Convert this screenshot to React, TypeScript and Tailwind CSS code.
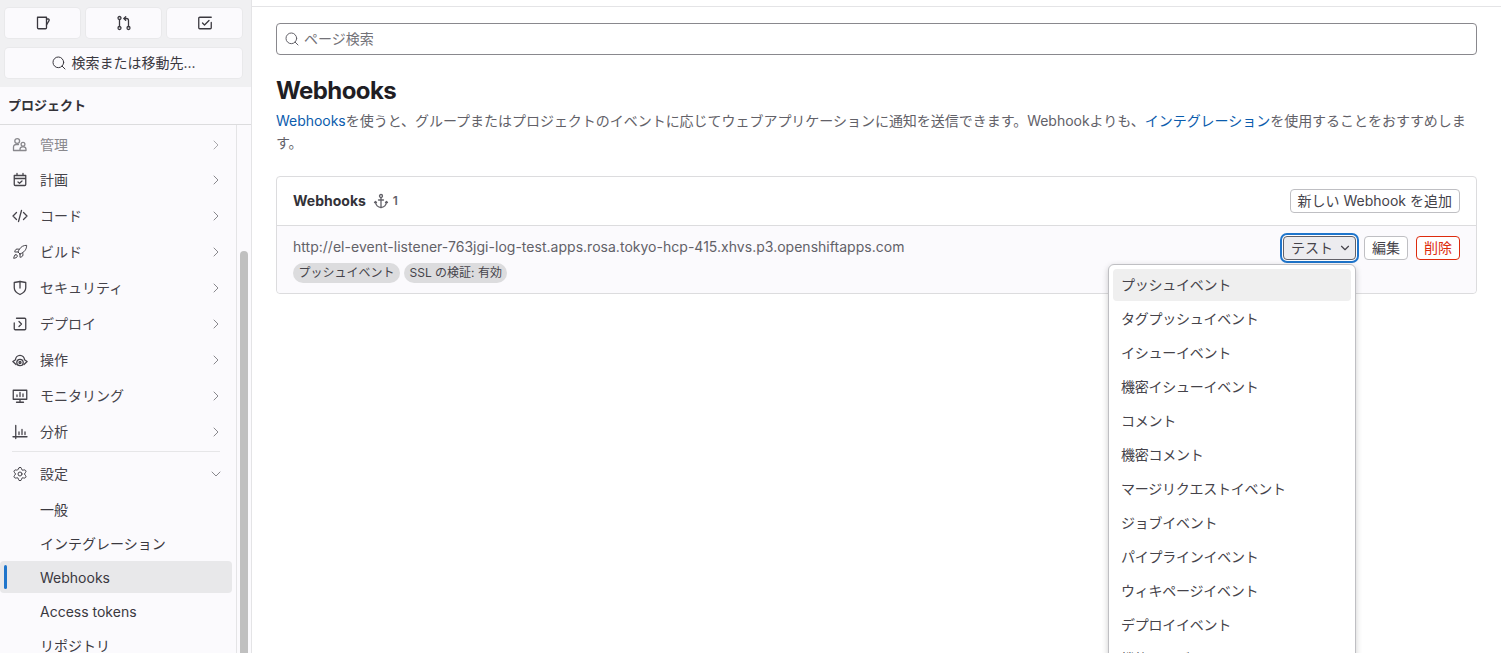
import type { ReactNode } from 'react';

import { ChevronDown, ChevronRight, Rocket, Search, Settings } from 'lucide-react';

const Icon = ({ children }: { children: ReactNode }) => (
  <svg
    width="16"
    height="16"
    viewBox="0 0 16 16"
    fill="none"
    stroke="currentColor"
    strokeWidth="1.3"
    strokeLinecap="round"
    strokeLinejoin="round"
    className="shrink-0"
  >
    {children}
  </svg>
);

const IssueIcon = () => (
  <Icon>
    <path d="M2.5 2.25h9v10.5a1 1 0 0 1-1 1h-7a1 1 0 0 1-1-1z" />
    <path d="M11.5 4h1.7a1 1 0 0 1 .8 1.6L11.5 10" />
  </Icon>
);
const MergeIcon = () => (
  <Icon>
    <circle cx="3.5" cy="3" r="1.5" />
    <circle cx="3.5" cy="13" r="1.5" />
    <circle cx="12.5" cy="13" r="1.5" />
    <path d="M3.5 4.5v7M12.5 11.5V5.5a2 2 0 0 0-2-2H8" />
    <path d="M9.7 1.8 8 3.5l1.7 1.7" />
  </Icon>
);
const TodoIcon = () => (
  <Icon>
    <path d="M14.25 7.5v5.25a1 1 0 0 1-1 1H2.75a1 1 0 0 1-1-1V3.25a1 1 0 0 1 1-1h11.5" />
    <path d="m5.5 8 2 2 4.5-4.5" />
  </Icon>
);
const UsersIcon = () => (
  <Icon>
    <circle cx="5.2" cy="4" r="2.4" />
    <path d="M1.5 13.5V10A2.5 2.5 0 0 1 4 7.5h2.5M7.5 13.5h-6" />
    <circle cx="11" cy="7.2" r="1.9" />
    <path d="M8 13.5v-1.2a2.5 2.5 0 0 1 2.5-2.5h1a2.5 2.5 0 0 1 2.5 2.5v1.2z" />
  </Icon>
);
const PlanIcon = () => (
  <Icon>
    <path d="M2.25 3.5h11.5v9a1 1 0 0 1-1 1h-9.5a1 1 0 0 1-1-1zM2.25 6.5h11.5M5 1.5v2M11 1.5v2" />
    <path d="m6 10 1.5 1.3L10 9" />
  </Icon>
);
const CodeIcon = () => (
  <Icon>
    <path d="M4.5 4.5 1 8l3.5 3.5M11.5 4.5 15 8l-3.5 3.5M9.5 2.5l-3 11" />
  </Icon>
);
const ShieldIcon = () => (
  <Icon>
    <path d="M2.25 2.5 8 1.5l5.75 1v5.2c0 3-2.5 5.3-5.75 6.8-3.25-1.5-5.75-3.8-5.75-6.8z" />
    <path d="M8 1.5V8" />
  </Icon>
);
const DeployIcon = () => (
  <Icon>
    <path d="M4.5 2.25h8.25a1 1 0 0 1 1 1v9.5a1 1 0 0 1-1 1h-9.5a1 1 0 0 1-1-1V7" />
    <path d="m7 5.5 2.5 2.5L7 10.5" />
  </Icon>
);
const OperationsIcon = () => (
  <Icon>
    <path d="M4 12.5.9 9.5l2.6-1.7a4.5 4.5 0 0 1 9 0l2.600 1.7-3.100 3" />
    <circle cx="8" cy="10.5" r="3.2" />
    <circle cx="8" cy="10.5" r="1" />
  </Icon>
);
const MonitorIcon = () => (
  <Icon>
    <path d="M1.25 2.25h13.5v9H1.25zM8 11.25v3M4.5 14.25h7" />
    <path d="M5 8.5V7M8 8.5v-4M11 8.5V6" />
  </Icon>
);
const ChartIcon = () => (
  <Icon>
    <path d="M1 12.75h14M3.75 1.5v13M7 8v2.5M10 5.5v5M13 8v2.5" />
  </Icon>
);
const AnchorIcon = () => (
  <svg
    width="16"
    height="16"
    viewBox="0 0 16 16"
    fill="none"
    stroke="currentColor"
    strokeWidth="1.3"
    strokeLinecap="round"
    strokeLinejoin="round"
  >
    <circle cx="8" cy="3" r="1.5" />
    <path d="M8 4.5v10M5.5 7h5" />
    <path d="m1.500 9.500 1-1 1 1M2.500 9c0 3 2.500 5.500 5.500 5.500s5.500-2.500 5.500-5.500M12.500 9.500l1-1 1 1" />
  </svg>
);

const navItems = [
  { label: '計画', icon: <PlanIcon /> },
  { label: 'コード', icon: <CodeIcon /> },
  { label: 'ビルド', icon: <Rocket size={16} strokeWidth={1.5} className="shrink-0" /> },
  { label: 'セキュリティ', icon: <ShieldIcon /> },
  { label: 'デプロイ', icon: <DeployIcon /> },
  { label: '操作', icon: <OperationsIcon /> },
  { label: 'モニタリング', icon: <MonitorIcon /> },
  { label: '分析', icon: <ChartIcon /> },
];

const subItems = ['一般', 'インテグレーション', 'Webhooks', 'Access tokens', 'リポジトリ'];

const testEvents = [
  'プッシュイベント',
  'タグプッシュイベント',
  'イシューイベント',
  '機密イシューイベント',
  'コメント',
  '機密コメント',
  'マージリクエストイベント',
  'ジョブイベント',
  'パイプラインイベント',
  'ウィキページイベント',
  'デプロイイベント',
  '機能フラグイベント',
];

const TopButton = ({ children }: { children: ReactNode }) => (
  <button className="flex h-[30px] w-[75px] items-center justify-center rounded-[4px] bg-[#fbfafd] text-[#3a383f] shadow-[0_0_0_1px_#e9e9eb]">
    {children}
  </button>
);

function Sidebar() {
  return (
    <aside className="flex h-screen w-[252px] shrink-0 flex-col overflow-hidden border-r border-[#e4e4e6] bg-[#fbfafd]">
      <div className="flex h-[87px] shrink-0 flex-col gap-[10px] bg-[#f0f0f2] px-[5px] pt-2">
        <div className="flex w-[237px] gap-[6px]">
          <TopButton>
            <IssueIcon />
          </TopButton>
          <TopButton>
            <MergeIcon />
          </TopButton>
          <TopButton>
            <TodoIcon />
          </TopButton>
        </div>
        <button className="flex h-[30px] w-[237px] items-center justify-center gap-1 rounded-[4px] bg-[#fbfafd] text-sm text-[#3a383f] shadow-[0_0_0_1px_#e9e9eb]">
          <Search size={16} strokeWidth={1.5} />
          検索または移動先...
        </button>
      </div>
      <div className="flex h-[38px] shrink-0 items-center border-b border-[#dcdcde] px-2 text-[13px] font-bold text-[#333238]">
        プロジェクト
      </div>
      <div className="flex min-h-0 flex-1">
        <nav className="w-[237px] shrink-0 overflow-hidden border-r border-[#e4e4e6] pr-[4px] pt-[2px]">
          <div className="flex h-[35px] items-center gap-3 pl-3 pr-2 text-sm text-[#89888d]">
            <UsersIcon />
            <span className="flex-1">管理</span>
            <ChevronRight size={16} strokeWidth={1.5} className="text-[#aaa9ad]" />
          </div>
          {navItems.map((item) => (
            <div key={item.label} className="flex h-9 items-center gap-3 pl-3 pr-2 text-sm text-[#45434a]">
              {item.icon}
              <span className="flex-1">{item.label}</span>
              <ChevronRight size={16} strokeWidth={1.5} className="text-[#89888d]" />
            </div>
          ))}
          <div className="ml-3 mr-3 mt-[1px] border-t border-[#e6e6e8]" />
          <div className="mt-[4px] flex h-9 items-center gap-3 pl-3 pr-2 text-sm text-[#45434a]">
            <Settings size={16} strokeWidth={1.5} className="shrink-0" />
            <span className="flex-1">設定</span>
            <ChevronDown size={16} strokeWidth={1.5} className="text-[#89888d]" />
          </div>
          <div className="mt-[1px] flex flex-col gap-[2px]">
            {subItems.map((label) => (
              <div
                key={label}
                className={`relative flex h-8 items-center rounded-[4px] pl-10 pt-[2px] text-sm text-[#3a383f] ${
                  label === 'Webhooks' ? 'bg-[#e8e8ea]' : ''
                }`}
              >
                {label === 'Webhooks' && (
                  <span className="absolute bottom-1 left-1 top-1 w-[3px] rounded-[2px] bg-[#1f75cb]" />
                )}
                {label}
              </div>
            ))}
          </div>
        </nav>
        <div className="flex flex-1 justify-center pt-[126px]">
          <div className="w-2 rounded-t-[4px] bg-[#c0c0c0]" />
        </div>
      </div>
    </aside>
  );
}

const SmallButton = ({ children, className }: { children: ReactNode; className: string }) => (
  <button className={`flex h-6 items-center rounded-[4px] border bg-white px-[7px] text-sm ${className}`}>
    {children}
  </button>
);

const Badge = ({ children }: { children: ReactNode }) => (
  <span className="flex h-5 items-center rounded-full bg-[#dcdcde] px-[5.5px] text-xs text-[#45434a]">{children}</span>
);

function Main() {
  return (
    <main className="h-screen min-w-0 flex-1 overflow-hidden bg-white">
      <div className="mt-[6px] border-t border-[#e4e4e6] px-6 pt-4">
        <div className="flex h-8 items-center gap-1 rounded-[4px] border border-[#89888d] px-[7px] text-sm text-[#737278]">
          <Search size={16} strokeWidth={1.5} className="text-[#626168]" />
          ページ検索
        </div>
        <h1 className="mt-5 text-2xl font-bold leading-8 tracking-[-0.6px] text-[#1f1e24]">Webhooks</h1>
        <p className="mt-[3px] text-sm leading-[22px] tracking-[-0.03px] text-[#626168]">
          <a className="text-[#0b5cad]">Webhooks</a>
          を使うと、グループまたはプロジェクトのイベントに応じてウェブアプリケーションに通知を送信できます。Webhookよりも、
          <a className="text-[#0b5cad]">インテグレーション</a>
          を使用することをおすすめします。
        </p>
        <section className="mt-[22px] rounded-[4px] border border-[#dcdcde]">
          <header className="flex h-[49px] items-center justify-between border-b border-[#dcdcde] px-4 pb-[1px]">
            <div className="flex items-center gap-[7px] text-sm font-bold text-[#333238]">
              Webhooks
              <span className="flex items-center gap-1 text-xs font-semibold text-[#626168]">
                <AnchorIcon />1
              </span>
            </div>
            <SmallButton className="border-[#bfbfc3] text-[#45434a]">新しい Webhook を追加</SmallButton>
          </header>
          <div className="flex h-[67px] justify-between rounded-b-[4px] bg-[#fbfafd] px-4 pt-[10px]">
            <div>
              <div className="text-sm leading-[22px] tracking-[0.02px] text-[#626168]">
                http://el-event-listener-763jgi-log-test.apps.rosa.tokyo-hcp-415.xhvs.p3.openshiftapps.com
              </div>
              <div className="mt-[5px] flex gap-1">
                <Badge>プッシュイベント</Badge>
                <Badge>SSL の検証: 有効</Badge>
              </div>
            </div>
            <div className="flex items-start gap-2">
              <div className="relative">
                <button className="flex h-6 items-center gap-[5px] rounded-[4px] border border-[#626168] bg-[#ececef] pl-[7px] pr-[3px] text-sm text-[#45434a] shadow-[0_0_0_1px_#fff,0_0_0_3px_#1f75cb]">
                  テスト
                  <ChevronDown size={14} strokeWidth={2} />
                </button>
                <div className="absolute right-0 top-[28px] z-10 w-[248px] rounded-[6px] border border-[#bfbfc3] bg-white p-1 shadow-[0_2px_6px_rgba(0,0,0,0.2)]">
                  {testEvents.map((label, i) => (
                    <div
                      key={label}
                      className={`flex h-8 items-center rounded-[4px] px-2 text-sm tracking-[-0.25px] text-[#45434a] ${
                        i === 0 ? 'bg-[#efefef]' : 'mt-[2px]'
                      }`}
                    >
                      {label}
                    </div>
                  ))}
                </div>
              </div>
              <SmallButton className="border-[#bfbfc3] text-[#45434a]">編集</SmallButton>
              <SmallButton className="border-[#dd2b0e] text-[#dd2b0e]">削除</SmallButton>
            </div>
          </div>
        </section>
      </div>
    </main>
  );
}

export default function App() {
  return (
    <div className="flex h-screen overflow-hidden bg-white font-['Inter','Noto_Sans_CJK_JP',sans-serif]">
      <Sidebar />
      <Main />
    </div>
  );
}
